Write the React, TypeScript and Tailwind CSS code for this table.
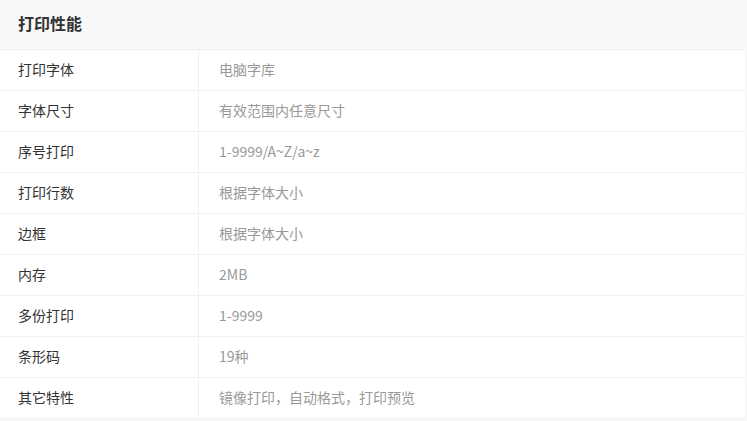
const specs: [string, string][] = [
  ["打印字体", "电脑字库"],
  ["字体尺寸", "有效范围内任意尺寸"],
  ["序号打印", "1-9999/A~Z/a~z"],
  ["打印行数", "根据字体大小"],
  ["边框", "根据字体大小"],
  ["内存", "2MB"],
  ["多份打印", "1-9999"],
  ["条形码", "19种"],
  ["其它特性", "镜像打印，自动格式，打印预览"],
];

export default function App() {
  return (
    <div
      className="w-[747px] h-[421px] bg-[#f7f7f7] overflow-hidden"
      style={{ fontFamily: '"Noto Sans CJK SC", "Noto Sans", sans-serif' }}
    >
      <div className="w-[745px] bg-white">
        <div className="h-[50px] flex items-center px-[18px] pb-[3px] bg-[#f8f8f8] border-b border-[#eeeeee]">
          <h2 className="text-[16px] font-bold text-[#333333]">打印性能</h2>
        </div>
        {specs.map(([label, value]) => (
          <div key={label} className="flex h-[41px] border-b border-[#f0f0f0]">
            <div className="w-[199px] shrink-0 flex items-center pl-[18px] pb-[1px] border-r border-[#f0f0f0] text-[14px] text-[#333333]">
              {label}
            </div>
            <div className="flex-1 flex items-center pl-[20px] pb-[1px] text-[14px] text-[#999999]">
              {value}
            </div>
          </div>
        ))}
      </div>
    </div>
  );
}
